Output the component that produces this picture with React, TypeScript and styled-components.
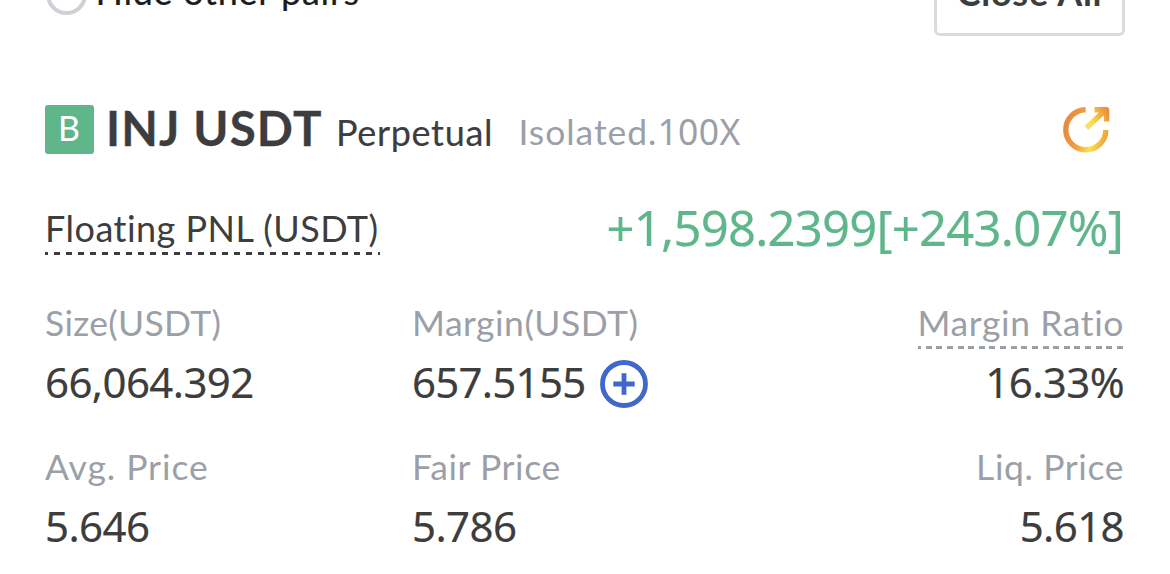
import React from 'react'
import styled, { createGlobalStyle } from 'styled-components'

const words = `Lato, 'Open Sans', sans-serif`
const figures = `'Noto Sans', 'Open Sans', sans-serif`

const GlobalStyle = createGlobalStyle`
  body{
    margin: 0;
    background: #fff;
    font-family: ${words};
    font-variant-ligatures: none;
    color: #3d3d3d;
  }
`

const Page = styled.main`
  display: flex;
  flex-direction: column;
  box-sizing: border-box;
  height: 574px;
  padding: 0 45px;
  overflow: hidden;
`

// scrolled halfway under the top edge
const Toolbar = styled.div`
  display: flex;
  flex-shrink: 0;
  align-items: center;
  justify-content: space-between;
  height: 90px;
  margin-top: -54px;
`
const HidePairs = styled.label`
  display: flex;
  align-items: center;
  font-size: 36px;
  line-height: 44px;
  letter-spacing: 0.7px;
  color: #1c1c1c;
  -webkit-text-stroke: 0.2px;
`
const Radio = styled.span`
  box-sizing: border-box;
  width: 41px;
  height: 41px;
  margin: 7px 9px 0 0.5px;
  border: 4px solid #cdd0d4;
  border-radius: 50%;
`
const CloseAll = styled.button`
  box-sizing: border-box;
  width: 191px;
  height: 90px;
  padding: 2px 0 0;
  border: 3px solid #dadbdd;
  border-radius: 6px;
  background: #fff;
  font: 700 36px ${words};
  letter-spacing: 0.75px;
  color: #3d3d3d;
`

const Header = styled.header`
  display: flex;
  align-items: flex-start;
  height: 49px;
  margin-top: 69px;
`
const Badge = styled.span`
  width: 48px;
  height: 49px;
  padding-right: 1px;
  border-radius: 3px;
  background: #5fb68a;
  color: #fff;
  font-size: 34px;
  line-height: 45px;
  text-align: center;
`
const Names = styled.div`
  display: flex;
  flex: 1;
  align-items: baseline;
  margin-left: 12px;
  white-space: nowrap;
`
const Symbol = styled.h1`
  margin: 0;
  font-size: 47.5px;
  font-weight: 700;
  line-height: 45px;
  letter-spacing: 1.15px;
  -webkit-text-stroke: 0.3px;
`
const Kind = styled.span`
  margin-left: 13.4px;
  font-size: 36px;
  line-height: 43px;
  letter-spacing: 0.66px;
  -webkit-text-stroke: 0.15px;
`
const Mode = styled.span`
  align-self: flex-start;
  margin-left: 25.4px;
  font-size: 35.5px;
  line-height: 52px;
  letter-spacing: 0.95px;
  color: #9b9fa7;
`
const Leverage = styled.span`
  font-family: ${figures};
  letter-spacing: 0.4px;
`
const ShareIcon = styled.svg`
  width: 48px;
  height: 48px;
  margin: 1px 15px 0 0;
`

const Pnl = styled.section`
  display: flex;
  align-items: flex-start;
  justify-content: space-between;
  height: 52px;
  margin-top: 49px;
`
const Hint = styled.span<{ $period?: number }>`
  display: inline-block;
  padding-bottom: 1px;
  background: repeating-linear-gradient(
    90deg,
    currentColor 0 6px,
    transparent 6px ${p => p.$period || 12}px
  ) -3px 100% / calc(100% + 3px) 3px no-repeat;
`
const PnlLabel = styled(Hint)`
  padding: 0 1px 2px 0;
  font-size: 36px;
  line-height: 50px;
  letter-spacing: 0.48px;
`
const PnlValue = styled.strong`
  margin-right: 2px;
  font: 400 49px/49px ${figures};
  letter-spacing: -0.78px;
  color: #5fb68a;
  -webkit-text-stroke: 0.15px;
`

const Stats = styled.dl`
  display: grid;
  grid-template-columns: 367px 1fr auto;
  row-gap: 30px;
  margin: 42px 1px 0 0;
`
const Stat = styled.div<{ $right?: boolean }>`
  text-align: ${p => p.$right ? 'right' : 'left'};
`
const Label = styled.dt<{ $spacing?: number }>`
  height: 54px;
  font-size: 35.5px;
  line-height: 51px;
  letter-spacing: ${p => p.$spacing || 0.6}px;
  color: #9b9fa7;
`
const Value = styled.dd<{ $spacing?: number }>`
  height: 60px;
  margin: 0;
  font-family: ${figures};
  font-size: 42px;
  line-height: 62px;
  letter-spacing: ${p => p.$spacing || -0.6}px;
  -webkit-text-stroke: 0.15px;
`
const ValueRow = styled(Value)`
  display: flex;
`
const PlusIcon = styled.svg`
  width: 48px;
  height: 48px;
  margin: 9px 0 0 14.5px;
`

const Share = () => {
  return <ShareIcon viewBox='0 0 48 48' fill='none' strokeWidth='5.4'>
    <defs>
      <linearGradient id='ring' gradientUnits='userSpaceOnUse' x1='1' y1='20' x2='46' y2='32'>
        <stop offset='0' stopColor='#e5883a' />
        <stop offset='0.4' stopColor='#f0a042' />
        <stop offset='0.68' stopColor='#fbe24a' />
        <stop offset='1' stopColor='#ee9a3c' />
      </linearGradient>
      <linearGradient id='arrow' gradientUnits='userSpaceOnUse' x1='22' y1='24' x2='48' y2='10'>
        <stop offset='0' stopColor='#fbd9a0' />
        <stop offset='0.35' stopColor='#fbe14a' />
        <stop offset='1' stopColor='#ea8f3a' />
      </linearGradient>
    </defs>
    <path d='M23.7 3.8A20 20 0 1 0 43.8 24' stroke='url(#ring)' />
    <path d='M24.3 22L43 4.5' stroke='url(#arrow)' />
    <path d='M32.5 3.7H44.6V15.5' stroke='url(#arrow)' strokeLinejoin='round' />
  </ShareIcon>
}

const Plus = () => {
  return <PlusIcon viewBox='0 0 48 48' fill='none' stroke='#4067cc' strokeWidth='4.8'>
    <circle cx='24' cy='24' r='21.5' />
    <path d='M13.3 24H34.7M24 13.3V34.7' />
  </PlusIcon>
}

const App = () => {
  return <Page>
    <GlobalStyle />
    <Toolbar>
      <HidePairs><Radio />Hide other pairs</HidePairs>
      <CloseAll>Close All</CloseAll>
    </Toolbar>

    <Header>
      <Badge>B</Badge>
      <Names>
        <Symbol>INJ USDT</Symbol>
        <Kind>Perpetual</Kind>
        <Mode>Isolated.<Leverage>100X</Leverage></Mode>
      </Names>
      <Share />
    </Header>

    <Pnl>
      <PnlLabel>Floating PNL (USDT)</PnlLabel>
      <PnlValue>+1,598.2399[+243.07%]</PnlValue>
    </Pnl>

    <Stats>
      <Stat>
        <Label $spacing={0.3}>Size(USDT)</Label>
        <Value>66,064.392</Value>
      </Stat>
      <Stat>
        <Label $spacing={0.5}>Margin(USDT)</Label>
        <ValueRow $spacing={-0.75}>657.5155<Plus /></ValueRow>
      </Stat>
      <Stat $right>
        <Label><Hint $period={10.63}>Margin Ratio</Hint></Label>
        <Value>16.33%</Value>
      </Stat>
      <Stat>
        <Label $spacing={0.95}>Avg. Price</Label>
        <Value>5.646</Value>
      </Stat>
      <Stat>
        <Label>Fair Price</Label>
        <Value>5.786</Value>
      </Stat>
      <Stat $right>
        <Label>Liq. Price</Label>
        <Value>5.618</Value>
      </Stat>
    </Stats>
  </Page>
}

export default App
